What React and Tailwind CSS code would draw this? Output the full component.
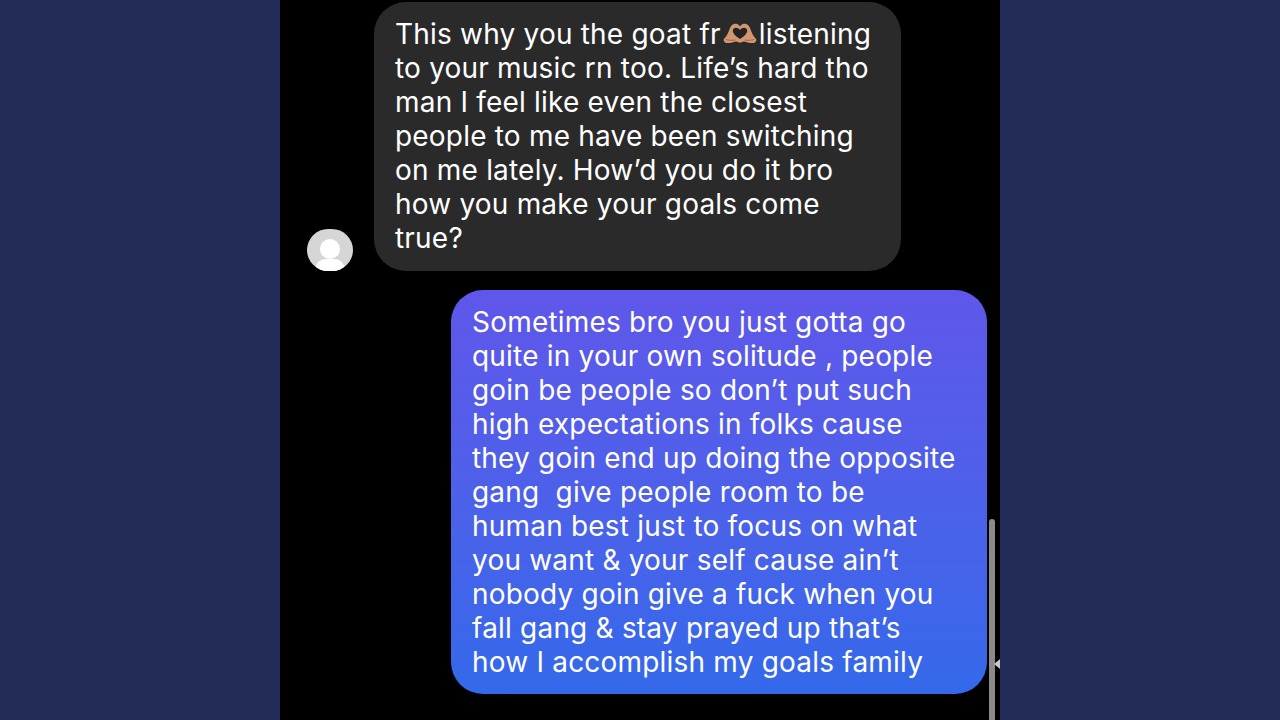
const FIRST = [
  null,
  'to your music rn too. Life’s hard tho',
  'man I feel like even the closest',
  'people to me have been switching',
  'on me lately. How’d you do it bro',
  'how you make your goals come',
  'true?',
];

const SECOND = [
  'Sometimes bro you just gotta go',
  'quite in your own solitude , people',
  'goin be people so don’t put such',
  'high expectations in folks cause',
  'they goin end up doing the opposite',
  'gang  give people room to be',
  'human best just to focus on what',
  'you want & your self cause ain’t',
  'nobody goin give a fuck when you',
  'fall gang & stay prayed up that’s',
  'how I accomplish my goals family',
];

function HeartHands() {
  return (
    <svg viewBox="0 0 34 21" className="w-[34px] h-[21px] shrink-0 mx-[2px] -mt-[2px]">
      <path
        d="M1 16 C4 13 5.5 9 7 5 C8 2 10.5 .5 13 .7 C15 .9 16 2 17 3.2 C18 2 19 .9 21 .7 C23.5 .5 26 2 27 5 C28.5 9 30 13 33 16 C34 17.5 32.5 20 30 20 C27 20.3 24 19.5 21 18.5 C19.5 18.7 18 19.7 17 19.7 C16 19.7 14.5 18.7 13 18.5 C10 19.5 7 20.3 4 20 C1.5 20 0 17.5 1 16 Z"
        fill="#d09770"
      />
      <path
        d="M17 16 C13 13.5 9.6 10.5 9.8 7.2 C10.1 4.2 14.6 3.6 17 7 C19.4 3.6 23.9 4.2 24.2 7.2 C24.4 10.5 21 13.5 17 16 Z"
        fill="#242424"
      />
      <path d="M3 16.5 C6 17.5 9 17.5 12.5 17 M31 16.5 C28 17.5 25 17.5 21.5 17" stroke="#a9683f" strokeWidth="1" fill="none" />
    </svg>
  );
}

function Avatar() {
  return (
    <div className="w-[46px] h-[42px] rounded-full bg-[#d6d6d6] overflow-hidden relative shrink-0">
      <div className="absolute left-[13px] top-[10px] w-[20px] h-[20px] rounded-full bg-white" />
      <div className="absolute left-[8px] top-[30px] w-[30px] h-[22px] rounded-full bg-white" />
    </div>
  );
}

export default function App() {
  return (
    <div className="h-[720px] overflow-hidden bg-[#222b58] flex justify-center" style={{ fontFamily: 'Inter, sans-serif' }}>
      <div className="relative w-[720px] h-full bg-black pt-[2px] flex flex-col text-white text-[28px] leading-[34px] tracking-[0.2px]">
        <div className="flex items-end pl-[27px] gap-[21px]">
          <Avatar />
          <div className="w-[527px] h-[269px] rounded-[32px] bg-[#2a2a2a] px-[21px] pt-[15px]">
            <div className="flex items-center whitespace-pre h-[34px]">
              <span>This why you the goat fr</span>
              <HeartHands />
              <span>listening</span>
            </div>
            {FIRST.slice(1).map((line) => (
              <div key={line} className="whitespace-pre">{line}</div>
            ))}
          </div>
        </div>

        <div className="mt-[19px] ml-[171px] w-[536px] h-[404px] rounded-[32px] bg-gradient-to-b from-[#5f57ea] to-[#3369ea] px-[21px] pt-[15px]">
          {SECOND.map((line) => (
            <div key={line} className="whitespace-pre">{line}</div>
          ))}
        </div>

        {/* scrollbar and the little notch */}
        <div className="absolute left-[709px] top-[519px] w-[6px] h-[210px] rounded-full bg-[#8a8a8a]" />
        <div className="absolute left-[714px] top-[659px] w-[6px] h-[10px] bg-[#c8c8c8] [clip-path:polygon(100%_0,100%_100%,0_50%)]" />
      </div>
    </div>
  );
}
